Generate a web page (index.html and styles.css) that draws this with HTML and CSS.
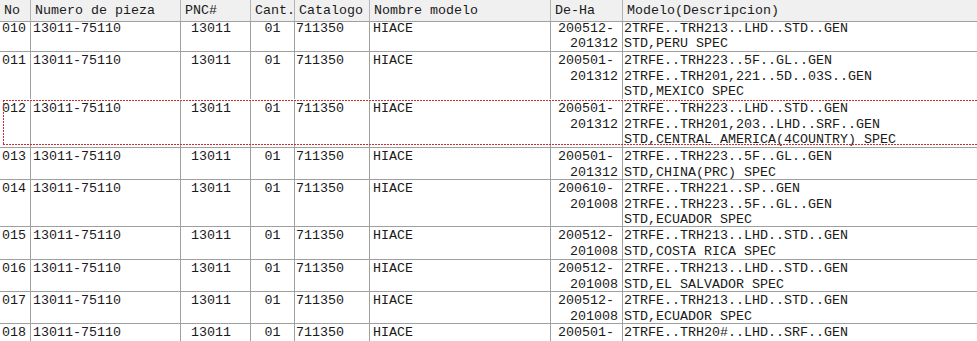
FILE: index.html
```html
<!DOCTYPE html>
<html lang="es">
<head>
<meta charset="utf-8">
<title>Piezas</title>
<link rel="stylesheet" href="styles.css">
</head>
<body>
<div class="grid">
  <div class="head">
    <div class="h">No</div>
    <div class="h">Numero de pieza</div>
    <div class="h">PNC#</div>
    <div class="h">Cant.</div>
    <div class="h">Catalogo</div>
    <div class="h">Nombre modelo</div>
    <div class="h">De-Ha</div>
    <div class="h last">Modelo(Descripcion)</div>
  </div>
  <div class="viewport">
    <div class="row partial">
      <div class="c no">010</div><div class="c part">13011-75110</div><div class="c pnc">13011</div><div class="c qty">01</div><div class="c cat">711350</div><div class="c name">HIACE</div>
      <div class="c dh"><span class="from">200512-</span><span>201312</span></div>
      <div class="c desc"><span>2TRFE..TRH213..LHD..STD..GEN</span><span>STD,PERU SPEC</span></div>
    </div>
    <div class="row l3">
      <div class="c no">011</div><div class="c part">13011-75110</div><div class="c pnc">13011</div><div class="c qty">01</div><div class="c cat">711350</div><div class="c name">HIACE</div>
      <div class="c dh"><span class="from">200501-</span><span>201312</span></div>
      <div class="c desc"><span>2TRFE..TRH223..5F..GL..GEN</span><span>2TRFE..TRH201,221..5D..03S..GEN</span><span>STD,MEXICO SPEC</span></div>
    </div>
    <div class="row l3 focus">
      <div class="c no">012</div><div class="c part">13011-75110</div><div class="c pnc">13011</div><div class="c qty">01</div><div class="c cat">711350</div><div class="c name">HIACE</div>
      <div class="c dh"><span class="from">200501-</span><span>201312</span></div>
      <div class="c desc"><span>2TRFE..TRH223..LHD..STD..GEN</span><span>2TRFE..TRH201,203..LHD..SRF..GEN</span><span>STD,CENTRAL AMERICA(4COUNTRY) SPEC</span></div>
    </div>
    <div class="row l2">
      <div class="c no">013</div><div class="c part">13011-75110</div><div class="c pnc">13011</div><div class="c qty">01</div><div class="c cat">711350</div><div class="c name">HIACE</div>
      <div class="c dh"><span class="from">200501-</span><span>201312</span></div>
      <div class="c desc"><span>2TRFE..TRH223..5F..GL..GEN</span><span>STD,CHINA(PRC) SPEC</span></div>
    </div>
    <div class="row l3 tight">
      <div class="c no">014</div><div class="c part">13011-75110</div><div class="c pnc">13011</div><div class="c qty">01</div><div class="c cat">711350</div><div class="c name">HIACE</div>
      <div class="c dh"><span class="from">200610-</span><span>201008</span></div>
      <div class="c desc"><span>2TRFE..TRH221..SP..GEN</span><span>2TRFE..TRH223..5F..GL..GEN</span><span>STD,ECUADOR SPEC</span></div>
    </div>
    <div class="row l2 loose">
      <div class="c no">015</div><div class="c part">13011-75110</div><div class="c pnc">13011</div><div class="c qty">01</div><div class="c cat">711350</div><div class="c name">HIACE</div>
      <div class="c dh"><span class="from">200512-</span><span>201008</span></div>
      <div class="c desc"><span>2TRFE..TRH213..LHD..STD..GEN</span><span>STD,COSTA RICA SPEC</span></div>
    </div>
    <div class="row l2">
      <div class="c no">016</div><div class="c part">13011-75110</div><div class="c pnc">13011</div><div class="c qty">01</div><div class="c cat">711350</div><div class="c name">HIACE</div>
      <div class="c dh"><span class="from">200512-</span><span>201008</span></div>
      <div class="c desc"><span>2TRFE..TRH213..LHD..STD..GEN</span><span>STD,EL SALVADOR SPEC</span></div>
    </div>
    <div class="row l2">
      <div class="c no">017</div><div class="c part">13011-75110</div><div class="c pnc">13011</div><div class="c qty">01</div><div class="c cat">711350</div><div class="c name">HIACE</div>
      <div class="c dh"><span class="from">200512-</span><span>201008</span></div>
      <div class="c desc"><span>2TRFE..TRH213..LHD..STD..GEN</span><span>STD,ECUADOR SPEC</span></div>
    </div>
    <div class="row last-row">
      <div class="c no">018</div><div class="c part">13011-75110</div><div class="c pnc">13011</div><div class="c qty">01</div><div class="c cat">711350</div><div class="c name">HIACE</div>
      <div class="c dh"><span class="from">200501-</span></div>
      <div class="c desc"><span>2TRFE..TRH20#..LHD..SRF..GEN</span></div>
    </div>
  </div>
</div>
</body>
</html>
```

FILE: styles.css
```css
html, body {
  margin: 0;
  padding: 0;
  background: #ffffff;
}

body {
  width: 977px;
  height: 341px;
  overflow: hidden;
  font-family: "Courier New", "Nimbus Mono PS", "Nimbus Mono L", "FreeMono", "Liberation Mono", monospace;
  font-size: 13.333px;
  color: #1a1a1a;
}

.grid {
  display: flex;
  flex-direction: column;
  height: 341px;
}

.head,
.row {
  display: grid;
  grid-template-columns: 31px 150px 70px 44px 75px 181px 72px 1fr;
  box-sizing: border-box;
}

.head {
  height: 22px;
  background: #f0f0f0;
  border-bottom: 1px solid #a0a0a0;
}

.h {
  border-right: 1px solid #b4b4b4;
  padding: 1px 0 0 4px;
  line-height: 20px;
  white-space: nowrap;
}

.h.last {
  border-right: none;
}

.viewport {
  flex: 1;
  overflow: hidden;
}

.row {
  position: relative;
  border-bottom: 1px solid #a0a0a0;
}

.row.partial { height: 30px; }
.row.l2 { height: 32px; }
.row.l3 { height: 48px; }
.row.l3.tight { height: 47px; }
.row.l2.loose { height: 33px; }
.row.last-row { height: 40px; }

.c {
  border-right: 1px solid #a0a0a0;
  padding-top: 1px;
  line-height: 15.6px;
  white-space: pre;
  overflow: hidden;
}

.partial .c {
  padding-top: 0;
  line-height: 14.6px;
}

.no { padding-left: 2px; }
.part { padding-left: 2px; }
.pnc { padding-left: 10px; }
.qty { text-align: center; }
.cat { padding-left: 1px; }
.name { padding-left: 3px; }

.dh {
  display: flex;
  flex-direction: column;
  align-items: flex-end;
  padding-right: 4px;
}

.dh .from {
  margin-right: 4px;
}

.desc {
  display: flex;
  flex-direction: column;
  border-right: none;
  padding-left: 1px;
}

/* keyboard focus rectangle of the current item */
.focus::before {
  content: "";
  position: absolute;
  top: -1px;
  left: 0;
  right: 0;
  height: 1px;
  background: #ffffff;
}

.focus::after {
  content: "";
  position: absolute;
  top: 0;
  bottom: 2px;
  left: 3px;
  right: -10px;
  background:
    repeating-linear-gradient(to right, #c8302f 0 2px, transparent 2px 3px) top left / 100% 1px no-repeat,
    repeating-linear-gradient(to right, #c8302f 0 2px, transparent 2px 3px) bottom left / 100% 1px no-repeat,
    repeating-linear-gradient(to bottom, #c8302f 0 2px, transparent 2px 3px) top left / 1px 100% no-repeat;
  pointer-events: none;
}
```
